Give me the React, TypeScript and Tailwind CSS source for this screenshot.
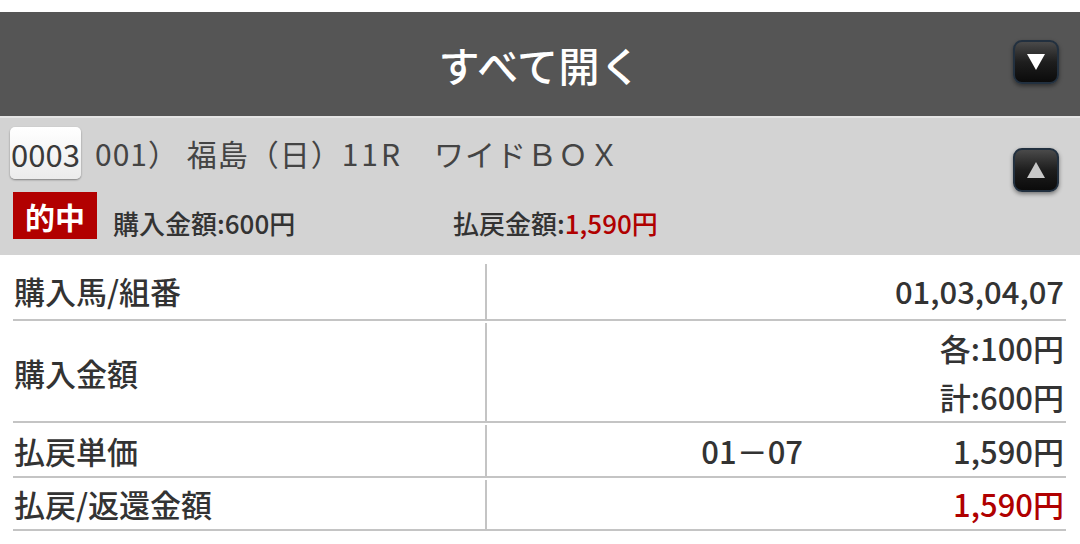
import React from "react";

const FONT = '"Noto Sans CJK JP", "Noto Sans", sans-serif';

function ArrowButton({ dir }: { dir: "up" | "down" }) {
  return (
    <div className="w-[46px] h-[44px] rounded-[9px] border-2 border-[#22303f] bg-gradient-to-b from-[#4a4a4a] via-[#1e1e1e] to-[#0b0b0b] shadow-[0_2px_4px_rgba(0,0,0,0.45)] flex items-center justify-center">
      <svg width="20" height="18" viewBox="0 0 20 18">
        {dir === "down" ? (
          <polygon points="1,1 19,1 10,17" fill="#ffffff" />
        ) : (
          <polygon points="10,1 19,17 1,17" fill="#c8c8c8" />
        )}
      </svg>
    </div>
  );
}

export default function App() {
  return (
    <div
      className="w-[1080px] h-[544px] bg-white overflow-hidden text-[#333333] font-medium"
      style={{ fontFamily: FONT }}
    >
      <div className="h-[12px]" />
      {/* header bar */}
      <div className="h-[104px] bg-[#555555] grid grid-cols-[1fr_auto_1fr] items-center">
        <div />
        <div className="text-white text-[41px] leading-none tracking-[0.5px]">すべて開く</div>
        <div className="justify-self-end mr-[21px] -mt-[4px]">
          <ArrowButton dir="down" />
        </div>
      </div>
      {/* gray summary */}
      <div className="h-[139px] bg-[#d3d3d3] border-t-2 border-[#e4e4e4] flex">
        <div className="flex-1 pl-[10px] pt-[9px]">
          <div className="flex items-center h-[52px]">
            <div className="h-[52px] w-[71px] rounded-[5px] bg-gradient-to-b from-white to-[#ececec] shadow-[0_1px_2px_rgba(0,0,0,0.4)] flex items-center justify-center text-[31px] leading-none text-[#3a3a3a] font-normal">
              0003
            </div>
            <div className="ml-[14px] text-[30px] leading-none text-[#444444] tracking-[1px] whitespace-pre font-normal">
              001） 福島（日）<span className="tracking-[3px]">11R</span>　ワイドＢＯＸ
            </div>
          </div>
          <div className="flex items-end mt-[13px] ml-[3px]">
            <div className="w-[84px] h-[47px] bg-[#b20000] text-white text-[30px] leading-none font-bold flex items-center justify-center">
              的中
            </div>
            <div className="ml-[16px] mb-[3px] text-[26px] leading-none text-[#333333] w-[340px]">
              購入金額:600円
            </div>
            <div className="mb-[3px] text-[26px] leading-none text-[#333333]">
              払戻金額:<span className="text-[#b00000]">1,590円</span>
            </div>
          </div>
        </div>
        <div className="pt-[30px] pr-[21px]">
          <ArrowButton dir="up" />
        </div>
      </div>
      {/* table */}
      <div className="ml-[13px] w-[1053px] text-[31px] leading-none text-[#333333]">
        <div className="flex pt-[9px] border-b-2 border-[#c4c4c4]">
          <div className="w-[474px] h-[55px] border-r-2 border-[#c4c4c4] flex items-center pl-[1px] pb-[3px]">
            購入馬/組番
          </div>
          <div className="flex-1 flex items-center justify-end pr-[2px] pb-[3px]">01,03,04,07</div>
        </div>
        <div className="flex pt-[2px] border-b-2 border-[#c4c4c4]">
          <div className="w-[474px] h-[98px] border-r-2 border-[#c4c4c4] flex items-center pl-[1px]">
            購入金額
          </div>
          <div className="flex-1 flex flex-col items-end pr-[2px]">
            <div className="h-[49px] flex items-center">各:100円</div>
            <div className="h-[49px] flex items-center">計:600円</div>
          </div>
        </div>
        <div className="flex pt-[2px] border-b-2 border-[#c4c4c4]">
          <div className="w-[474px] h-[51px] border-r-2 border-[#c4c4c4] flex items-center pl-[1px]">
            払戻単価
          </div>
          <div className="flex-1 flex items-center pr-[2px]">
            <div className="w-[316px] text-right">01－07</div>
            <div className="flex-1 text-right">1,590円</div>
          </div>
        </div>
        <div className="flex pt-[2px] border-b-2 border-[#c4c4c4]">
          <div className="w-[474px] h-[49px] border-r-2 border-[#c4c4c4] flex items-center pl-[1px] pb-[2px]">
            払戻/返還金額
          </div>
          <div className="flex-1 flex items-center justify-end pr-[2px] pb-[2px] text-[#b00000]">1,590円</div>
        </div>
      </div>
    </div>
  );
}
